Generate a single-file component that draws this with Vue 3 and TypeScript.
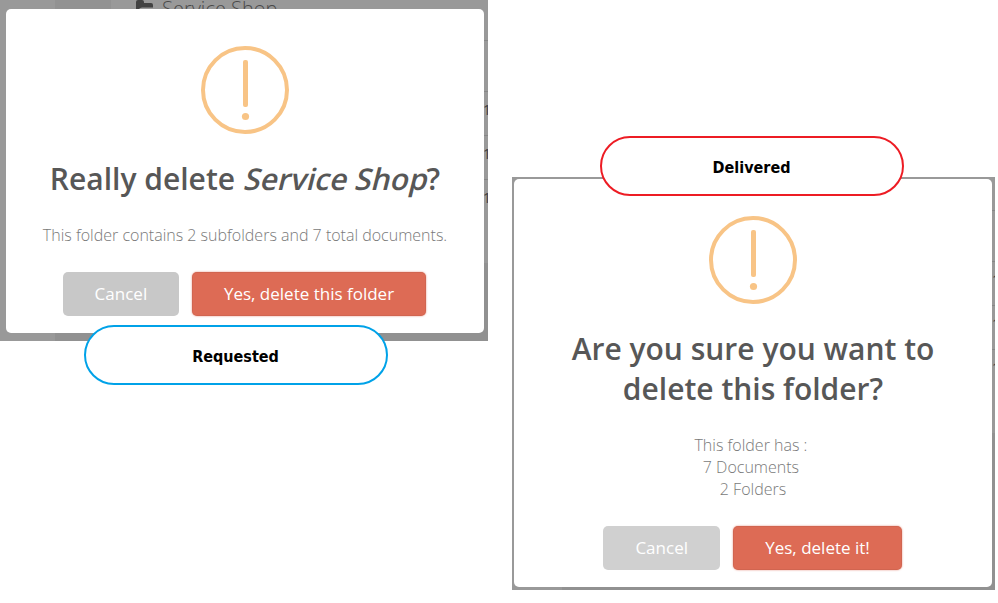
<script setup lang="ts">
interface Dialog {
  id: string
  label: string
  title: string
  name?: string
  lines: string[]
  confirm: string
}

const dialogs: Dialog[] = [
  {
    id: 'requested',
    label: 'Requested',
    title: 'Really delete ',
    name: 'Service Shop',
    lines: ['This folder contains 2 subfolders and 7 total documents.'],
    confirm: 'Yes, delete this folder',
  },
  {
    id: 'delivered',
    label: 'Delivered',
    title: 'Are you sure you want to delete this folder?',
    lines: ['This folder has :\u00a0', '7 Documents\u00a0', '2 Folders'],
    confirm: 'Yes, delete it!',
  },
]
</script>

<template>
  <main class="board">
    <section v-for="d in dialogs" :key="d.id" class="scene" :class="d.id">
      <div class="behind">
        <div v-if="d.name" class="folder">
          <svg width="20" height="16" viewBox="0 0 20 16">
            <path d="M1 14V2Q1 0 3 0H7Q9 0 9 2V3H16Q18 3 18 5V7.5H7Q5 7.5 4 9L1 14Z" fill="#424242" />
          </svg>
          <span>{{ d.name }}</span>
        </div>
        <div class="rows">
          <span class="row blank"></span>
          <span class="row">1</span>
          <span class="row">1</span>
          <span class="row">1</span>
        </div>
      </div>
      <div class="modal">
        <svg class="warn" width="88" height="88" viewBox="0 0 88 88">
          <circle cx="44" cy="44" r="42" fill="none" stroke="#f8c486" stroke-width="4" />
          <rect x="42" y="14" width="5" height="47" rx="2" fill="#f8c486" />
          <circle cx="44.5" cy="70.5" r="3.6" fill="#f8c486" />
        </svg>
        <h2><span>{{ d.title }}<template v-if="d.name"><em>{{ d.name }}</em>?</template></span></h2>
        <div class="text">
          <p v-for="line in d.lines" :key="line"><span>{{ line }}</span></p>
        </div>
        <div class="actions">
          <button class="cancel">Cancel</button>
          <button class="confirm">{{ d.confirm }}</button>
        </div>
      </div>
      <div class="callout"><span>{{ d.label }}</span></div>
    </section>
  </main>
</template>

<style>
body {
  margin: 0;
  background: #fff;
}
</style>

<style scoped>
.board {
  box-sizing: border-box;
  width: 998px;
  height: 603px;
  display: flex;
  align-items: flex-start;
  gap: 24px;
  overflow: hidden;
  font-family: 'Open Sans', 'Noto Sans', sans-serif;
}
.scene {
  position: relative;
  box-sizing: border-box;
  flex: none;
}
.requested {
  width: 488px;
  height: 341px;
  padding: 9px 4px 8px 6px;
  background:
    linear-gradient(#919191, #919191) 55px 100% / 433px 78px no-repeat,
    linear-gradient(#929292, #929292) 55px 0 / 56px 9px no-repeat,
    #999;
}
.delivered {
  width: 483px;
  height: 413px;
  margin-top: 177px;
  padding: 2px 3px 3px 2px;
  background:
    linear-gradient(#919191, #919191) 50px 100% / 433px 157px no-repeat,
    #999;
}
.behind {
  position: absolute;
  inset: 0;
  overflow: hidden;
}
.folder {
  position: absolute;
  left: 135px;
  top: 0;
  display: flex;
  gap: 7px;
  color: #4a4a4a;
  font-size: 20px;
  font-weight: 300;
  line-height: 17px;
}
.rows {
  position: absolute;
  right: 0;
  top: 40px;
  width: 4px;
  overflow: hidden;
}
.delivered .rows {
  top: 33px;
  width: 3px;
}
.row {
  display: block;
  box-sizing: border-box;
  height: 44px;
  border-top: 1px solid #868686;
  color: #3c3c3c;
  font-size: 14px;
  line-height: 36px;
}
.requested .row {
  text-indent: -1px;
}
.row.blank {
  height: 51px;
}
.modal {
  position: relative;
  box-sizing: border-box;
  width: 478px;
  height: 100%;
  padding: 37px 17px 17px;
  border-radius: 5px;
  background: #fff;
  display: flex;
  flex-direction: column;
  align-items: center;
  text-align: center;
}
.warn {
  flex: none;
}
h2 {
  margin: 25px 0;
  color: #575757;
  font-size: 30px;
  font-weight: 600;
  line-height: 40px;
}
em {
  display: inline-block;
  font-style: normal;
  transform: skewX(-14deg);
  transform-origin: 50% 72%;
}
.text {
  color: #797979;
  font-size: 16px;
  font-weight: 300;
  line-height: 22px;
}
p {
  margin: 0;
}
.actions {
  display: flex;
  gap: 13px;
  margin-top: 26px;
  margin-right: 1px;
}
button {
  height: 44px;
  padding: 0 32px;
  border: 0;
  border-radius: 5px;
  color: #fff;
  font: 400 17px/44px 'Open Sans', 'Noto Sans', sans-serif;
  white-space: nowrap;
}
.cancel {
  width: 116px;
  padding: 0;
  background: #c8c8c8;
}
.delivered .cancel {
  width: 117px;
  background: #d0d0d0;
}
.confirm {
  background: #dd6b55;
  box-shadow: 0 0 2px rgba(221, 107, 85, 0.8), inset 0 0 0 1px rgba(0, 0, 0, 0.05);
}
.callout {
  position: absolute;
  box-sizing: border-box;
  width: 304px;
  height: 60px;
  padding: 1px 1px 0 0;
  border: 2px solid #00a2e8;
  border-radius: 30px;
  background: #fff;
  color: #000;
  font: 700 16px/58px 'DejaVu Sans Condensed', 'Noto Sans', sans-serif;
  text-align: center;
}
.requested .callout {
  left: 84px;
  top: 325px;
}
.delivered .callout {
  left: 88px;
  top: -41px;
  border-color: #ed1c24;
}
</style>
